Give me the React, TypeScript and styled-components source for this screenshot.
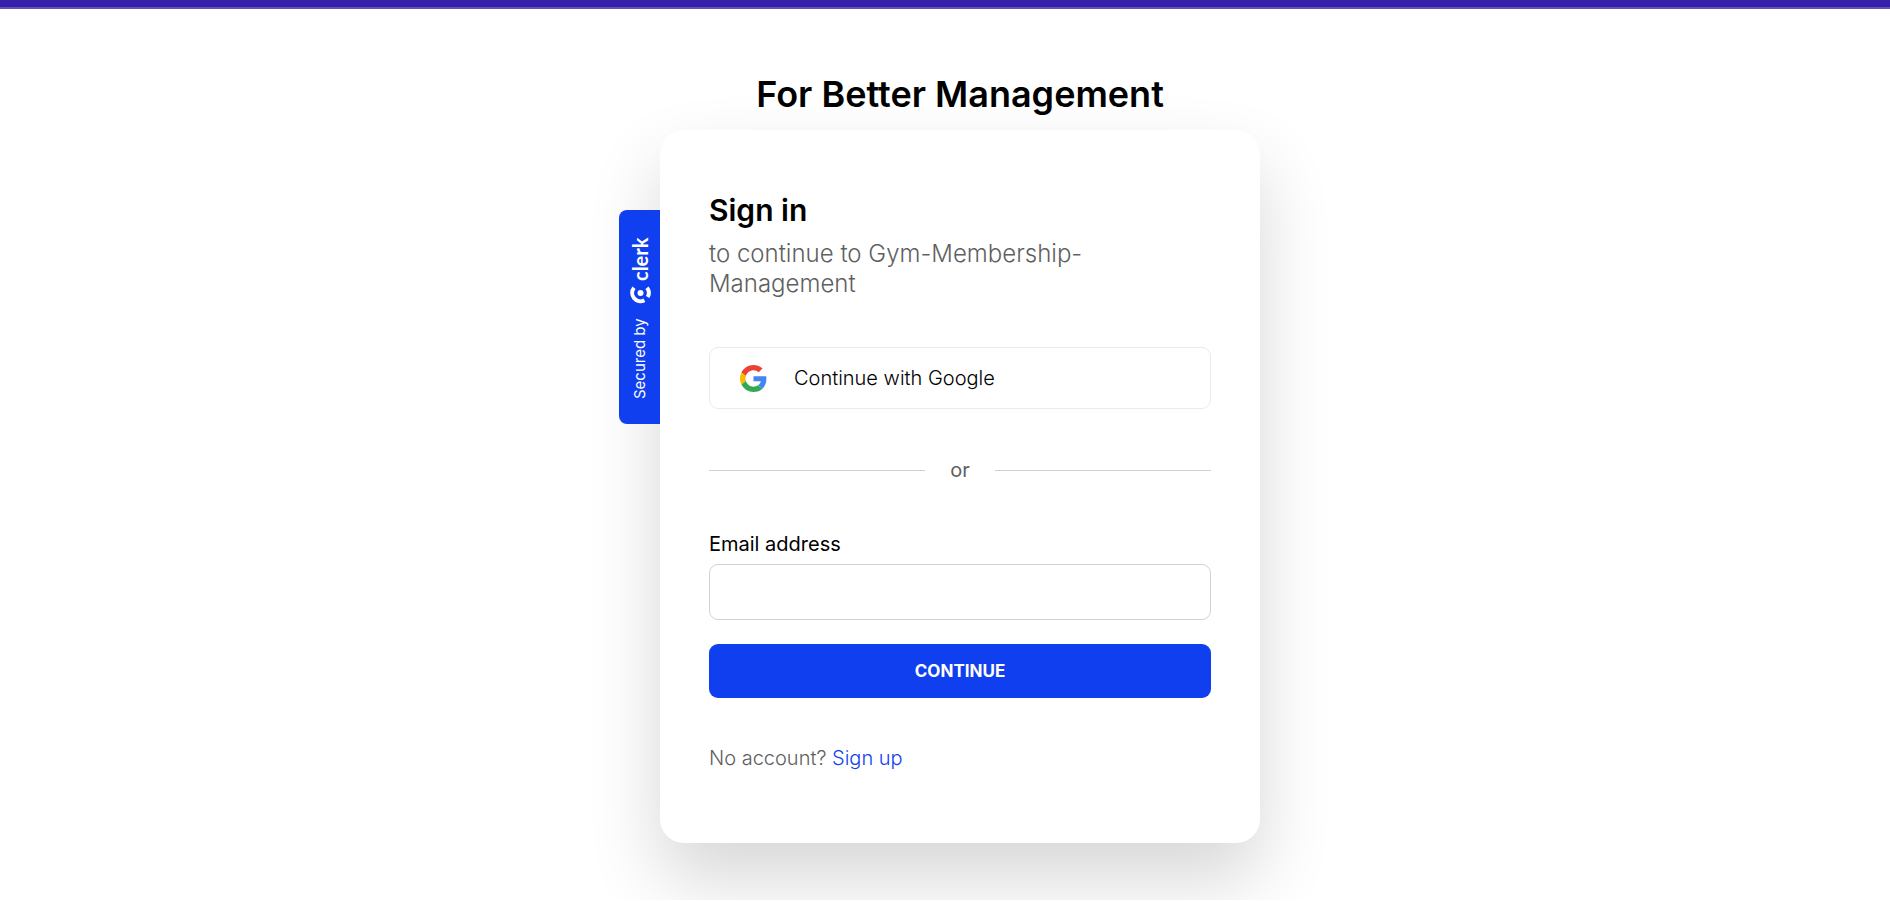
import React from "react";
import styled, { createGlobalStyle } from "styled-components";

const GlobalStyle = createGlobalStyle`
  *, *::before, *::after { box-sizing: border-box; }
  body {
    margin: 0;
    background: #fff;
    color: #000;
    font-family: Inter, "Liberation Sans", sans-serif;
    font-variant-ligatures: none;
    overflow-x: hidden;
  }
`;

const TopBar = styled.header`
  height: 9px;
  background: #3420a9;
  border-bottom: 2px solid #6550bf;
`;

const Page = styled.main`
  display: flex;
  flex-direction: column;
  align-items: center;
  padding: 65px 0 57px 30px;
`;

const Heading = styled.h1`
  margin: 0 0 16px;
  font-size: 36px;
  line-height: 40px;
  font-weight: 600;
`;

const Panel = styled.div`
  position: relative;
  width: 600px;
  max-width: 100%;
`;

const Card = styled.section`
  padding: 62px 49px 73px;
  border-radius: 24px;
  background: #fff;
  box-shadow: 0 36px 72px rgba(0, 0, 0, 0.16);
`;

const Badge = styled.a`
  position: absolute;
  top: 80px;
  right: 100%;
  display: flex;
  align-items: center;
  gap: 14px;
  width: 41px;
  height: 214px;
  padding: 25px 0;
  writing-mode: vertical-rl;
  transform: rotate(180deg);
  border-radius: 0 8px 8px 0;
  background: #103fef;
  color: #fff;
  font-size: 15px;
  line-height: 20px;
  text-decoration: none;
`;

const Brand = styled.span`
  display: flex;
  align-items: center;
  gap: 5px;
  font-family: Lato, sans-serif;
  font-size: 20px;
  font-weight: 700;

  svg { overflow: visible; }
`;

const Title = styled.h2`
  margin: 0 0 11px;
  font-size: 30px;
  line-height: 36px;
  font-weight: 600;
`;

const Subtitle = styled.p`
  margin: 0 0 48px;
  color: #5f5f5f;
  font-size: 24px;
  line-height: 30px;
  font-weight: 300;
`;

const SocialButton = styled.button`
  display: flex;
  align-items: center;
  gap: 27px;
  width: 100%;
  height: 62px;
  padding: 0 30px;
  border: 1px solid #ebebeb;
  border-radius: 9px;
  background: #fff;
  color: #000;
  font: 300 20px/24px Inter, sans-serif;
`;

const Divider = styled.div`
  display: flex;
  align-items: center;
  gap: 25px;
  margin: 49px 0 50px;
  color: #5f5f5f;
  font-size: 20px;
  line-height: 24px;

  &::before, &::after {
    content: "";
    flex: 1;
    height: 1px;
    background: #d2d2d2;
  }
`;

const Form = styled.form`
  display: flex;
  flex-direction: column;
`;

const Label = styled.label`
  margin-bottom: 8px;
  font-size: 20px;
  line-height: 24px;
`;

const TextInput = styled.input`
  height: 56px;
  margin-bottom: 24px;
  padding: 0 16px;
  border: 1px solid #d2d2d2;
  border-radius: 9px;
  background: #fff;
  font: 400 20px/24px Inter, sans-serif;
`;

const SubmitButton = styled.button`
  height: 54px;
  border: 0;
  border-radius: 9px;
  background: #103fef;
  color: #fff;
  font: 700 17px/20px Inter, sans-serif;
  text-transform: uppercase;
`;

const Footer = styled.p`
  margin: 48px 0 0;
  color: #5f5f5f;
  font-size: 20px;
  line-height: 24px;
  font-weight: 300;
`;

const SignUpLink = styled.a`
  color: #103fef;
  text-decoration: none;
`;

const GoogleIcon = () => (
  <svg width="27" height="27" viewBox="0 0 48 48" aria-hidden="true">
    <path fill="#EA4335" d="M24 9.5c3.54 0 6.71 1.22 9.21 3.6l6.85-6.85C35.9 2.38 30.47 0 24 0 14.62 0 6.51 5.38 2.56 13.22l7.98 6.19C12.43 13.72 17.74 9.5 24 9.5z" />
    <path fill="#4285F4" d="M46.98 24.55c0-1.57-.15-3.09-.38-4.55H24v9.02h12.94c-.58 2.96-2.26 5.48-4.78 7.18l7.73 6c4.51-4.18 7.09-10.36 7.09-17.65z" />
    <path fill="#FBBC05" d="M10.53 28.59c-.48-1.45-.76-2.99-.76-4.59s.27-3.14.76-4.59l-7.98-6.19C.92 16.46 0 20.12 0 24c0 3.88.92 7.54 2.56 10.78l7.97-6.19z" />
    <path fill="#34A853" d="M24 48c6.48 0 11.93-2.13 15.89-5.81l-7.73-6c-2.15 1.45-4.92 2.3-8.16 2.3-6.26 0-11.57-4.22-13.47-9.91l-7.98 6.19C6.51 42.62 14.62 48 24 48z" />
  </svg>
);

const ClerkIcon = () => (
  <svg width="21" height="18" viewBox="0 0 21 18" aria-hidden="true">
    <g transform="rotate(180 10 9)" fill="none" stroke="#fff" strokeWidth="4">
      <path d="M4 1.8A8.3 8.3 0 0 0 14.4 14.3" />
      <path d="M17 1.8A8.3 8.3 0 0 1 17.7 11.1" />
      <circle cx="10.5" cy="7" r="3" fill="#fff" stroke="none" />
    </g>
  </svg>
);

export default function App() {
  return (
    <>
      <GlobalStyle />
      <TopBar />
      <Page>
        <Heading>For Better Management</Heading>
        <Panel>
          <Badge href="#clerk">
            <span>Secured by</span>
            <Brand>
              <ClerkIcon />
              clerk
            </Brand>
          </Badge>
          <Card>
            <Title>Sign in</Title>
            <Subtitle>to continue to Gym-Membership-Management</Subtitle>
            <SocialButton type="button">
              <GoogleIcon />
              Continue with Google
            </SocialButton>
            <Divider>or</Divider>
            <Form onSubmit={(event) => event.preventDefault()}>
              <Label htmlFor="email">Email address</Label>
              <TextInput id="email" type="email" name="email" />
              <SubmitButton type="submit">Continue</SubmitButton>
            </Form>
            <Footer>
              No account? <SignUpLink href="#sign-up">Sign up</SignUpLink>
            </Footer>
          </Card>
        </Panel>
      </Page>
    </>
  );
}
